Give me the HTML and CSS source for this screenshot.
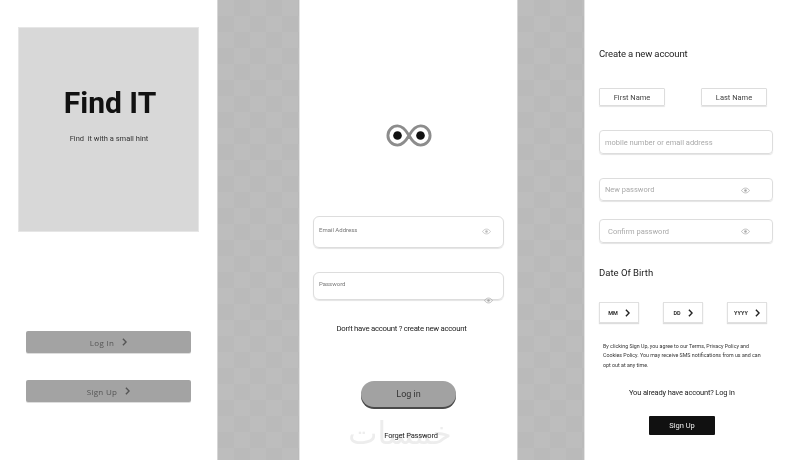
FILE: index.html
```html
<!DOCTYPE html>
<html lang="en">
<head>
<meta charset="utf-8">
<title>Find IT</title>
<link rel="stylesheet" href="styles.css">
</head>
<body>
<svg class="defs" width="0" height="0" aria-hidden="true">
  <symbol id="eye" viewBox="0 0 12 8"><path d="M.7 4C2.2 1.8 4 .8 6 .8s3.800 1 5.300 3.200C9.800 6.200 8 7.200 6 7.200S2.200 6.200.7 4z" fill="none" stroke="currentColor"/><circle cx="6" cy="4" r="1.700" fill="currentColor"/></symbol>
  <symbol id="chev" viewBox="0 0 6 10"><path d="M1 1l4 4-4 4" fill="none" stroke="currentColor" stroke-width="1.800"/></symbol>
</svg>
<main class="board">
  <section class="screen welcome">
    <div class="hero">
      <h1>Find IT</h1>
      <p>Find&nbsp; it with a small hint</p>
    </div>
    <div class="welcome-actions">
      <a class="grey-btn">Log In <svg class="chev"><use href="#chev"/></svg></a>
      <a class="grey-btn">Sign Up <svg class="chev"><use href="#chev"/></svg></a>
    </div>
  </section>
  <div class="gap gap-a"></div>
  <section class="screen login">
    <svg class="logo" viewBox="0 0 48 26" aria-hidden="true">
      <path d="M24 13C20 6 17 3 12 3a10 10 0 0 0 0 20c5 0 8-3 12-10s7-10 12-10a10 10 0 0 1 0 20c-5 0-8-3-12-10z" fill="none" stroke="#8c8c8c" stroke-width="3"/>
      <circle cx="12" cy="13" r="4.500" fill="#111"/><circle cx="36" cy="13" r="4.500" fill="#111"/>
    </svg>
    <div class="field email"><span>Email Address</span><svg class="eye"><use href="#eye"/></svg></div>
    <div class="field pass"><span>Password</span><svg class="eye eye-over"><use href="#eye"/></svg></div>
    <p class="hint">Don't have account ? create new account</p>
    <a class="pill">Log in</a>
    <p class="forgot">Forget Password</p>
    <span class="watermark" lang="ar">خمسات</span>
  </section>
  <div class="gap gap-b"></div>
  <section class="screen signup">
    <h2>Create a new account</h2>
    <div class="names"><div class="box">First Name</div><div class="box">Last Name</div></div>
    <div class="input mobile">mobile number or email address</div>
    <div class="input newpw">New password<svg class="eye"><use href="#eye"/></svg></div>
    <div class="input confirm">Confirm password<svg class="eye"><use href="#eye"/></svg></div>
    <h3>Date Of Birth</h3>
    <div class="dob">
      <div class="date"><b>MM</b><svg class="chev"><use href="#chev"/></svg></div>
      <div class="date"><b>DD</b><svg class="chev"><use href="#chev"/></svg></div>
      <div class="date"><b>YYYY</b><svg class="chev"><use href="#chev"/></svg></div>
    </div>
    <p class="terms">By clicking Sign Up, you agree to our Terms, Privacy Policy and Cookies Policy. You may receive SMS notifications from us and can opt out at any time.</p>
    <p class="already">You already have account? Log in</p>
    <a class="black-btn">Sign Up</a>
  </section>
</main>
</body>
</html>
```

FILE: styles.css
```css
* { box-sizing: border-box; margin: 0; padding: 0; }
html, body { width: 800px; height: 460px; overflow: hidden; background: #fff; }
body { font-family: Roboto, "Liberation Sans", sans-serif; color: #222; }
.defs { position: absolute; }
.board { display: flex; width: 800px; height: 460px; filter: grayscale(1) blur(.45px); }
.screen { background: #fff; height: 460px; display: flex; flex-direction: column; position: relative; }
.gap {
  background-color: #bfbbba;
  background-image: conic-gradient(#bdb9b8 25%, #c0bcbb 0 50%, #bdb9b8 0 75%, #c0bcbb 0);
  background-size: 32px 32px;
  border-left: 1px solid #d6d6d6;
  border-right: 1px solid #e4e4e4;
}
.gap-a { width: 83px; }
.gap-b { width: 68px; }

/* welcome */
.welcome { width: 217px; padding: 27px 26px 0 18px; }
.hero { width: 181px; height: 205px; background: #d8d8d8; border: 1px solid #e6e6e6; display: flex; flex-direction: column; align-items: center; padding-top: 55px; }
.hero h1 { font-size: 30px; line-height: 40px; font-weight: 700; color: #111; margin-left: 3px; }
.hero p { margin-top: 10px; font-size: 7.500px; line-height: 12px; color: #333; margin-left: 1px; }
.welcome-actions { margin: 99px 0 0 8px; display: flex; flex-direction: column; gap: 27px; }
.grey-btn { height: 22px; width: 165px; background: #a3a3a3; border-radius: 2px; box-shadow: 0 1px 0 #ddd; display: flex; align-items: center; justify-content: center; gap: 8px; font-family: "Open Sans", sans-serif; font-size: 8px; letter-spacing: .3px; color: #555; }
.chev { width: 5px; height: 8px; flex: none; }
.grey-btn .chev { color: #555; }

/* login */
.login { width: 217px; padding: 0 13px; align-items: center; }
.logo { width: 46px; height: 25px; margin-top: 123px; }
.field { width: 191px; border: 1px solid #ddd; border-radius: 6px; box-shadow: 0 1px 1px #e4e4e4; position: relative; font-size: 6px; color: #777; padding: 8px 5px 0; }
.field span { display: block; line-height: 9px; }
.email { height: 32px; margin-top: 68px; }
.pass { height: 28px; margin-top: 24px; padding-top: 6px; }
.eye { width: 9px; height: 7px; color: #bbb; position: absolute; right: 12px; top: 11px; }
.eye-over { top: 24px; right: 10px; color: #aaa; }
.hint { margin: 24px 0 0 -14px; font-size: 7.800px; line-height: 10px; letter-spacing: -.28px; color: #222; white-space: nowrap; }
.pill { width: 95px; height: 26px; margin-top: 47px; background: #a2a2a2; border-radius: 13px; box-shadow: 0 2px 0 #4a4a4a; display: flex; align-items: center; justify-content: center; font-size: 9px; color: #333; }
.forgot { margin: 24px 0 0 5px; font-size: 7.500px; line-height: 10px; letter-spacing: -.2px; color: #222; position: relative; z-index: 1; }
.watermark { position: absolute; left: 48px; top: 415px; width: 104px; text-align: center; font-family: "DejaVu Sans", sans-serif; font-size: 31px; line-height: 36px; color: #ededed; }

/* signup */
.signup { flex: 1; padding: 47px 14px 0; }
h2 { font-size: 9.500px; line-height: 14px; font-weight: 400; letter-spacing: -.15px; color: #222; }
.names { display: flex; justify-content: space-between; width: 168px; margin-top: 27px; }
.box { width: 66px; height: 18px; border: 1px solid #ddd; border-radius: 1px; box-shadow: 0 1px 1px #e4e4e4; display: flex; align-items: center; justify-content: center; font-size: 7.500px; color: #444; }
.input { width: 174px; border: 1px solid #ddd; border-radius: 4px; box-shadow: 0 1px 1px #e4e4e4; display: flex; align-items: center; padding-left: 5px; font-size: 7.500px; color: #aaa; position: relative; }
.input .eye { top: 8px; right: 22px; color: #aaa; }
.mobile { height: 24px; margin-top: 24px; }
.newpw { height: 23px; margin-top: 24px; }
.confirm { height: 24px; margin-top: 18px; padding-left: 8px; }
h3 { font-size: 9.500px; line-height: 14px; font-weight: 400; color: #222; margin-top: 23px; }
.dob { display: flex; justify-content: space-between; width: 168px; margin-top: 22px; }
.date { width: 40px; height: 21px; border: 1px solid #e0e0e0; box-shadow: 0 1px 1px #ddd; display: flex; align-items: center; justify-content: center; gap: 7px; font-size: 5.500px; color: #333; }
.date .chev { color: #222; }
.terms { width: 160px; margin: 19px 0 0 4px; font-size: 5.300px; line-height: 9.300px; color: #333; }
.already { margin: 17px 0 0 30px; font-size: 7.500px; line-height: 11px; letter-spacing: -.16px; color: #222; white-space: nowrap; }
.black-btn { width: 66px; height: 19px; margin: 18px 0 0 50px; background: #111; border-radius: 1px; display: flex; align-items: center; justify-content: center; font-size: 7.500px; color: #eee; }
```
